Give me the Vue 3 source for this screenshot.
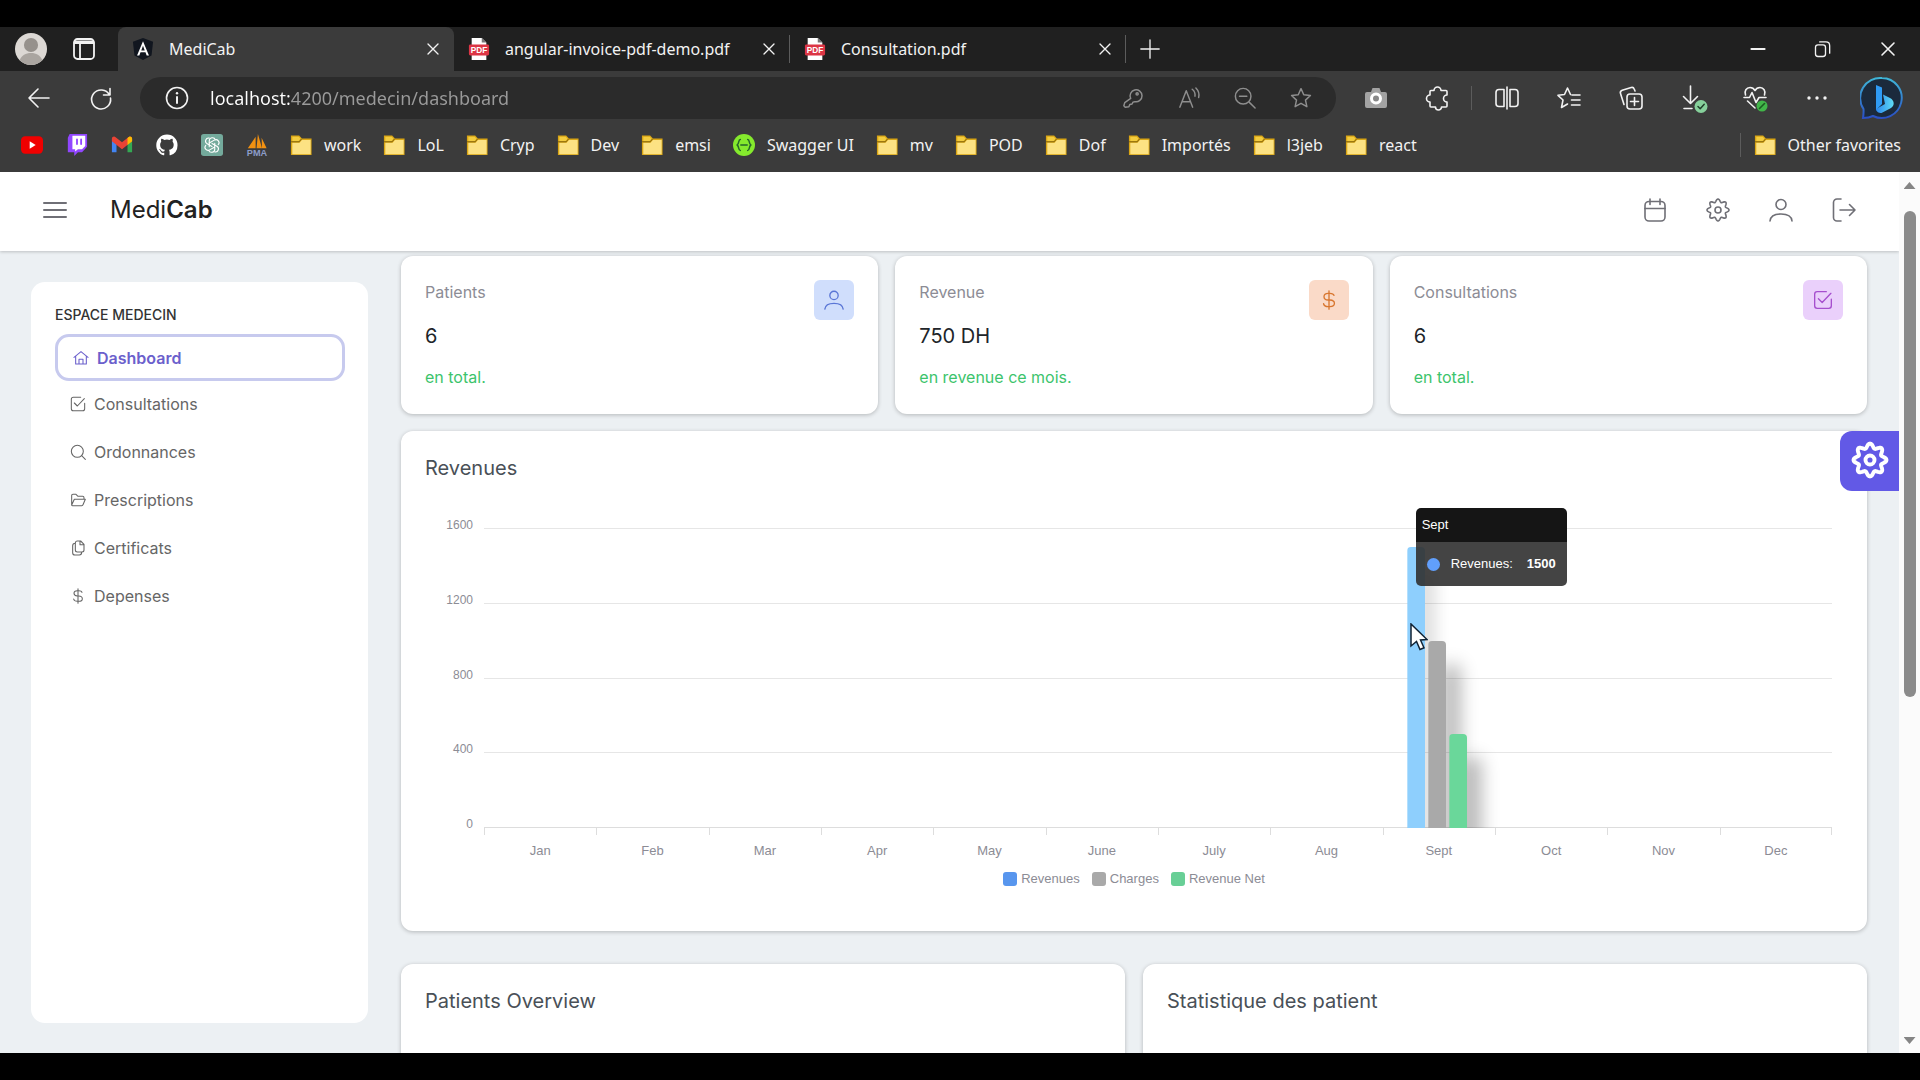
<script setup>
import { ref } from 'vue'

// Eight-lobed outline used by every gear icon
function gearPath(radius, amplitude) {
  const points = []
  for (let i = 0; i < 96; i++) {
    const angle = (i / 96) * Math.PI * 2
    const r = radius + amplitude * Math.cos(8 * angle)
    points.push(`${(12 + r * Math.sin(angle)).toFixed(2)} ${(12 - r * Math.cos(angle)).toFixed(2)}`)
  }
  return `M${points.join('L')}Z`
}

const folder = '<path d="M1 1.500h9l3 3.500h10.500V23H1z" fill="#d9a514" stroke="none"/><path d="M2.500 3h7l2 2.200L9.500 7.500h-7z" fill="#f3cc3f" stroke="none"/><path d="M2.500 9.500h8L13 6.500h9.500V22h-20z" fill="#fce283" stroke="none"/><path d="M1.500 8.500h8.500L12.500 5.500" stroke="#7d6010" stroke-width="1"/>'

const icons = {
  profile: '<circle cx="12" cy="12" r="12" fill="#dcd8d4" stroke="none"/><circle cx="12" cy="9" r="5.300" fill="#96918c" stroke="none"/><path d="M3.500 20.500c1.500-4 4.500-5.500 8.500-5.500s7 1.500 8.500 5.500a12 12 0 0 1-17 0z" fill="#aaa5a0" stroke="none"/>',
  tabs: '<rect x="2" y="2" width="20" height="20" rx="3.500" stroke-width="1.800"/><path d="M2.500 6h19M8 7v14.500" stroke-width="1.800"/><path d="M3 3.500h18v3H3z" fill="currentColor" stroke="none"/>',
  angular: '<path d="M12 0l11 4-1.700 15L12 24 2.700 19 1 4z" fill="#11161f" stroke="none"/><path d="M12 3.500L5.500 19H8l1.300-3.500h5.400L16 19h2.500zm0 5l1.900 5h-3.800z" fill="#fff" stroke="none"/>',
  close: '<path d="M6 6l12 12M18 6L6 18"/>',
  plus: '<path d="M12 1v22M1 12h22"/>',
  minimise: '<path d="M4 12h16" stroke-width="2.200"/>',
  restore: '<rect x="3" y="7" width="12" height="14" rx="3"/><path d="M8 3.500h7.500c3 0 4.500 1.500 4.500 4.500V17"/>',
  back: '<path d="M22 12H2M11 3l-9 9 9 9"/>',
  refresh: '<path d="M20.500 9A9.500 9.500 0 1 0 21.500 12M21 2.500V9h-6.500"/>',
  info: '<circle cx="12" cy="12" r="10.500"/><path d="M12 11v6" stroke-width="2"/><circle cx="12" cy="7.300" r="1.200" fill="currentColor" stroke="none"/>',
  key: '<path d="M9.500 12.500a6.500 6.500 0 1 1 4.500 3.500l-2 .5-1 2-2.500.5-1 2.500L3.500 22 2 20.500 3 17z"/><circle cx="16.500" cy="7.500" r="1.200"/>',
  read: '<path d="M2 22L9 4l7 18M4.500 16h9M15.500 2.500c2.500 2 3.500 4.500 3 7.500M19.500 1c3 3 4 6.500 3 10.500"/>',
  zoomout: '<circle cx="10" cy="10" r="8.500"/><path d="M16.500 16.500L23 23M6 10h8"/>',
  star: '<path d="M12 1.800l3 6.700 7.300.8-5.400 5 1.500 7.200L12 17.800l-6.400 3.700 1.500-7.200-5.400-5L9 8.500z"/>',
  camera: '<path d="M3 6h4l1.500-4h7L17 6h4a2 2 0 0 1 2 2v12a2 2 0 0 1-2 2H3a2 2 0 0 1-2-2V8a2 2 0 0 1 2-2z" fill="#a3a3a3" stroke="none"/><circle cx="12" cy="12.500" r="4.500" fill="#888" stroke="#fff" stroke-width="3"/>',
  puzzle: '<path d="M8 4.500a3.500 3.500 0 0 1 7 0h5a1 1 0 0 1 1 1V9a3.400 3.400 0 0 0 0 7v4a1 1 0 0 1-1 1h-4.500a3 3 0 0 1-6 0H5a1 1 0 0 1-1-1v-4a3.500 3.500 0 0 1 0-7V5.500a1 1 0 0 1 1-1z"/>',
  split: '<path d="M9 3.500H4a3 3 0 0 0-3 3v11a3 3 0 0 0 3 3h5zM15 3.500h5a3 3 0 0 1 3 3v11a3 3 0 0 1-3 3h-5zM12 1v22"/>',
  favourites: '<path d="M13.500 8.500L10.500 2l-3 6.500-6.500.8 5 4.700-1.500 7.500 6-3.500M15 9h8M14.500 14H23M14.500 19H23"/>',
  collections: '<rect x="8" y="8" width="15" height="15" rx="3"/><path d="M15.500 11.500v8M11.500 15.500h8M5 18.500L1.500 7.500c-.5-1.500.3-2.800 1.700-3.300l9-2.700c1.400-.4 2.600.3 3 1.500l.8 2"/>',
  download: '<path d="M9.500 0v17.500M2.500 10.500l7 7 7-7M3 22.500h8"/><circle cx="20" cy="20.500" r="6.500" fill="#86d09b" stroke="none"/><path d="M17 20.500l2.200 2.200 4-4.400" stroke="#20402a" stroke-width="1.500"/>',
  heart: '<path d="M2.500 9C1 5 3.500 1.500 7 1.500c2.200 0 4 1.200 5 3 1-1.800 2.800-3 5-3C20.500 1.500 23 5 21.500 9M1 11.500h5.500L9 6.500l4 10 3-5h7M4.500 15L12 22"/><circle cx="19" cy="20" r="5.500" fill="#41b649" stroke="none"/><path d="M16.500 22.500l5-5" stroke="#1b5c20"/>',
  dots: '<g fill="currentColor" stroke="none"><circle cx="4" cy="12" r="1.700"/><circle cx="12" cy="12" r="1.700"/><circle cx="20" cy="12" r="1.700"/></g>',
  pdf: '<path d="M4 0h11l5 5v19H4z" fill="#fff" stroke="none"/><path d="M15 0l5 5h-5z" fill="#777" stroke="none"/><rect x="1" y="7" width="22" height="12" rx="1.500" fill="#dc3545" stroke="none"/><text x="12" y="16.200" text-anchor="middle" font-family="Liberation Sans, sans-serif" font-size="9" font-weight="700" fill="#fff" stroke="none">PDF</text>',
  folder,
  youtube: '<rect x="0" y="2.500" width="24" height="19" rx="4.500" fill="#f00000" stroke="none"/><path d="M9.500 8l6.500 4-6.500 4z" fill="#fff" stroke="none"/>',
  twitch: '<path d="M4 0h19v14l-5.500 6H13l-4 4v-4H2V4z" fill="#9146ff" stroke="none"/><path d="M7 2h14v11l-3.500 3.500H13L10 19v-2.500H7z" fill="#fff" stroke="none"/><path d="M12 6v5M16.500 6v5" stroke="#9146ff" stroke-width="2"/>',
  gmail: '<g stroke="none"><path d="M1 5v15h5V9z" fill="#4285f4"/><path d="M23 5v15h-5V9z" fill="#34a853"/><path d="M1 5c0-2 2.500-3 4-1.500l7 5.500 7-5.500C20.500 2 23 3 23 5v3l-11 8.500L1 8z" fill="#ea4335"/><path d="M18 4.300L19 3.500C20.500 2 23 3 23 5v3l-5 4z" fill="#fbbc04"/></g>',
  github: '<path d="M12 .500C5.400.500.300 5.700.300 12.200c0 5.200 3.300 9.500 7.900 11.100.6.100.8-.3.800-.6v-2.200c-3.200.7-3.900-1.400-3.900-1.400-.5-1.300-1.300-1.700-1.300-1.700-1-.7.100-.7.100-.7 1.200.1 1.800 1.200 1.800 1.200 1 1.800 2.700 1.300 3.400 1 .1-.8.400-1.300.7-1.600-2.600-.3-5.300-1.300-5.300-5.800 0-1.300.5-2.300 1.200-3.100-.1-.3-.5-1.500.1-3.100 0 0 1-.3 3.200 1.200a11 11 0 0 1 5.800 0c2.200-1.500 3.200-1.200 3.200-1.200.6 1.600.2 2.800.1 3.100.8.800 1.200 1.800 1.200 3.100 0 4.500-2.700 5.500-5.300 5.800.4.400.8 1.100.8 2.200v3.200c0 .3.200.7.800.6a11.700 11.700 0 0 0 7.900-11.100C23.700 5.700 18.600.500 12 .500z" fill="#fff" stroke="none"/>',
  gpt: '<rect width="24" height="24" rx="3" fill="#74aa9c" stroke="none"/><g fill="none" stroke="#fff" stroke-width="1.200"><path d="M9 13.800V7.500c0-4 5.500-4.600 6.500-1.300M12 10.300l5.300 3c3.500 2 1.200 7-2.200 6.200"/><path d="M15 10.200v6.300c0 4-5.500 4.600-6.500 1.300M12 13.700l-5.300-3c-3.500-2-1.200-7 2.200-6.200M9 9.900l5.500-3.200c3.500-2 6.800 2.300 4.300 5M15 14.100l-5.500 3.200c-3.500 2-6.800-2.300-4.300-5"/></g>',
  pma: '<path d="M2 15.500L10.500 3v12.500zM11.500 15.500L13 0l4.500 15.500zM17.500 15.500L17 4l5.500 11.500z" fill="#f29111" stroke="none"/><text x="12" y="24" text-anchor="middle" font-family="Liberation Sans, sans-serif" font-size="10" font-weight="700" fill="#8c9cc8" stroke="none">PMA</text>',
  swagger: '<circle cx="12" cy="12" r="12" fill="#85ea2d" stroke="none"/><path d="M8 6C5.500 6 7 10.500 4.500 12 7 13.500 5.500 18 8 18M16 6c2.500 0 1 4.500 3.500 6-2.500 1.500-1 6-3.500 6M8.500 12h7" stroke="#24652b" stroke-width="1.600"/>',
  menu: '<path d="M1 5h22M1 12h22M1 19h22" stroke-width="2"/>',
  calendar: '<rect x="2" y="3.500" width="20" height="19.500" rx="4"/><path d="M2 10.500h20M7 1v5.500M17 1v5.500"/>',
  gear: `<path d="${gearPath(9.5, 1.5)}"/><circle cx="12" cy="12" r="3"/>`,
  user: '<circle cx="12" cy="6.500" r="5"/><path d="M1 23c.5-5 4-7 11-7s10.500 2 11 7"/>',
  logout: '<path d="M9 1H5a3.500 3.500 0 0 0-3.500 3.500v15A3.500 3.500 0 0 0 5 23h4M8 12h15M17.500 6.500L23 12l-5.500 5.500"/>',
  home: '<path d="M1.500 11L12 2.500 22.500 11M4 9.500V21h16V9.500M9 21v-7h6v7"/>',
  check: '<path d="M22 11v8a3 3 0 0 1-3 3H5a3 3 0 0 1-3-3V5a3 3 0 0 1 3-3h11M6.500 10.500L11 15 21.500 4"/>',
  search: '<circle cx="11" cy="11" r="9"/><path d="M17.500 17.500L23 23"/>',
  open: '<path d="M2.500 19.500V5.500a2 2 0 0 1 2-2h4.500l3 3h7a2 2 0 0 1 2 2V11M2.500 19.500l4-8.500H23l-3.500 8a2 2 0 0 1-2 1.500H4a1.500 1.500 0 0 1-1.500-1z"/>',
  copy: '<path d="M11 1.500h5l5 5V15a3 3 0 0 1-3 3h-7a3 3 0 0 1-3-3V4.500a3 3 0 0 1 3-3zM15 1.500V7h6M8 5C5 5 4 6.500 4 8.500V19a3.500 3.500 0 0 0 3.500 3.500H14c2.500 0 3.500-1.500 3.500-4"/>',
  dollar: '<path d="M12 1v22M18 6.500C17.500 4.500 15.500 4 13 4h-2C8 4 6 5.500 6 8s2 3.800 5 4h2c3.500.2 5.500 1.500 5.500 4s-2 4-5.500 4h-2c-3 0-5-1-5.500-3.500"/>'
}

const tabs = [
  { title: 'MediCab', icon: 'angular', active: true },
  { title: 'angular-invoice-pdf-demo.pdf', icon: 'pdf' },
  { title: 'Consultation.pdf', icon: 'pdf' }
]
const addressTools = [
  ['key', 'Saved passwords'], ['read', 'Read aloud'], ['zoomout', 'Zoom'], ['star', 'Add to favorites']
]
const extensionTools = [['camera', 'Screenshot'], ['puzzle', 'Extensions']]
const browserTools = [
  ['split', 'Split screen'], ['favourites', 'Favorites'], ['collections', 'Collections'],
  ['download', 'Downloads'], ['heart', 'Browser essentials'], ['dots', 'Settings and more']
]
const siteLinks = [
  ['youtube', 'YouTube'], ['twitch', 'Twitch'], ['gmail', 'Gmail'],
  ['github', 'GitHub'], ['gpt', 'ChatGPT'], ['pma', 'phpMyAdmin']
]
const favourites = ['work', 'LoL', 'Cryp', 'Dev', 'emsi', 'Swagger UI', 'mv', 'POD', 'Dof', 'Importés', 'l3jeb', 'react']

const address = ref('localhost:4200/medecin/dashboard')

const headerTools = [['calendar', 'Calendrier'], ['gear', 'Paramètres'], ['user', 'Profil'], ['logout', 'Déconnexion']]
const menu = [
  ['home', 'Dashboard'], ['check', 'Consultations'], ['search', 'Ordonnances'],
  ['open', 'Prescriptions'], ['copy', 'Certificats'], ['dollar', 'Depenses']
]
const stats = [
  { label: 'Patients', value: '6', note: 'en total.', icon: 'user', tone: 'blue' },
  { label: 'Revenue', value: '750 DH', note: 'en revenue ce mois.', icon: 'dollar', tone: 'orange' },
  { label: 'Consultations', value: '6', note: 'en total.', icon: 'check', tone: 'purple' }
]
const axisMax = 1600
const axis = [1600, 1200, 800, 400, 0]
const months = ['Jan', 'Feb', 'Mar', 'Apr', 'May', 'June', 'July', 'Aug', 'Sept', 'Oct', 'Nov', 'Dec']
const series = [
  { name: 'Revenues', tone: 'revenues', values: { Sept: 1500 } },
  { name: 'Charges', tone: 'charges', values: { Sept: 1000 } },
  { name: 'Revenue Net', tone: 'net', values: { Sept: 500 } }
]
const hovered = 'Sept'
</script>

<template>
  <div class="window">
    <div class="tab-strip">
      <div class="strip-start">
        <button class="profile" aria-label="Profile"><svg class="icon s32" viewBox="0 0 24 24" v-html="icons.profile"></svg></button>
        <button aria-label="Workspaces"><svg class="icon s24" viewBox="0 0 24 24" v-html="icons.tabs"></svg></button>
      </div>
      <div v-for="tab in tabs" :key="tab.title" class="tab" :class="{ active: tab.active }">
        <svg class="icon s22" viewBox="0 0 24 24" v-html="icons[tab.icon]"></svg>
        <span class="tab-title">{{ tab.title }}</span>
        <button aria-label="Close tab"><svg class="icon s20" viewBox="0 0 24 24" v-html="icons.close"></svg></button>
      </div>
      <button class="new-tab" aria-label="New tab"><svg class="icon s20" viewBox="0 0 24 24" v-html="icons.plus"></svg></button>
      <div class="window-controls">
        <button aria-label="Minimize"><svg class="icon s20" viewBox="0 0 24 24" v-html="icons.minimise"></svg></button>
        <button aria-label="Restore"><svg class="icon s20" viewBox="0 0 24 24" v-html="icons.restore"></svg></button>
        <button aria-label="Close"><svg class="icon s24" viewBox="0 0 24 24" v-html="icons.close"></svg></button>
      </div>
    </div>

    <div class="toolbar">
      <button class="tool" aria-label="Back"><svg class="icon s24" viewBox="0 0 24 24" v-html="icons.back"></svg></button>
      <button class="tool" aria-label="Refresh"><svg class="icon s24" viewBox="0 0 24 24" v-html="icons.refresh"></svg></button>
      <form class="address" @submit.prevent>
        <button type="button" class="site-info" aria-label="Site information"><svg class="icon s24" viewBox="0 0 24 24" v-html="icons.info"></svg></button>
        <input v-model="address" type="text" aria-label="Address" spellcheck="false" />
        <button v-for="[icon, label] in addressTools" :key="icon" type="button" class="address-tool" :aria-label="label">
          <svg class="icon s22" viewBox="0 0 24 24" v-html="icons[icon]"></svg>
        </button>
      </form>
      <button v-for="[icon, label] in extensionTools" :key="icon" class="tool" :aria-label="label">
        <svg class="icon s24" viewBox="0 0 24 24" v-html="icons[icon]"></svg>
      </button>
      <span class="divider"></span>
      <button v-for="[icon, label] in browserTools" :key="icon" class="tool" :aria-label="label">
        <svg class="icon s24" viewBox="0 0 24 24" v-html="icons[icon]"></svg>
      </button>
      <button class="bing" aria-label="Bing Chat">
        <svg viewBox="0 0 44 44" width="44" height="44">
          <defs>
            <linearGradient id="ring" x1="0" y1="0" x2="0" y2="1"><stop offset="0" stop-color="#3fb6d8" /><stop offset="1" stop-color="#2a4fc4" /></linearGradient>
            <linearGradient id="letter" x1="0" y1="0" x2="1" y2="0"><stop offset="0" stop-color="#2a86ee" /><stop offset="1" stop-color="#5fdcf5" /></linearGradient>
          </defs>
          <path d="M22 2a20 20 0 1 1-9 38c-3 1.500-6 2-10 2 .5-3 .8-5 .5-9A20 20 0 0 1 22 2z" fill="#1b2a3c" stroke="url(#ring)" stroke-width="2" />
          <path d="M16 9l6 2.500v16.500l-6 6z" fill="#2f9bf5" />
          <path d="M23 18.500l7 3.500c5 2.700 4.500 8 1 10l-9.500 5c-3 0-5.500-1.500-5.500-4l9-5z" fill="url(#letter)" />
        </svg>
      </button>
    </div>

    <nav class="bookmarks" aria-label="Favorites bar">
      <a v-for="[icon, label] in siteLinks" :key="icon" href="#" class="site" :aria-label="label">
        <svg class="icon s22" viewBox="0 0 24 24" v-html="icons[icon]"></svg>
      </a>
      <a v-for="name in favourites" :key="name" href="#" class="bookmark">
        <svg class="icon s22" viewBox="0 0 24 24" v-html="icons[name === 'Swagger UI' ? 'swagger' : 'folder']"></svg>{{ name }}
      </a>
      <span class="divider push"></span>
      <a href="#" class="bookmark other"><svg class="icon s22" viewBox="0 0 24 24" v-html="icons.folder"></svg>Other favorites</a>
    </nav>

    <div class="viewport">
      <div class="page">
        <header class="page-header">
          <button aria-label="Menu"><svg class="icon s24" viewBox="0 0 24 24" v-html="icons.menu"></svg></button>
          <a href="#" class="brand">Medi<b>Cab</b></a>
          <div class="header-tools">
            <button v-for="[icon, label] in headerTools" :key="icon" :aria-label="label">
              <svg class="icon s24" viewBox="0 0 24 24" v-html="icons[icon]"></svg>
            </button>
          </div>
        </header>

        <div class="content">
          <aside class="sidebar">
            <h2>ESPACE MEDECIN</h2>
            <nav aria-label="Espace medecin">
              <a v-for="([icon, label], i) in menu" :key="label" href="#" :class="{ current: i === 0 }">
                <svg class="icon s16" viewBox="0 0 24 24" v-html="icons[icon]"></svg>{{ label }}
              </a>
            </nav>
          </aside>

          <main class="main">
            <div class="stats">
              <section v-for="stat in stats" :key="stat.label" class="card stat">
                <div>
                  <h3>{{ stat.label }}</h3>
                  <p class="value">{{ stat.value }}</p>
                  <p class="note">{{ stat.note }}</p>
                </div>
                <span class="badge" :class="stat.tone"><svg class="icon s20" viewBox="0 0 24 24" v-html="icons[stat.icon]"></svg></span>
              </section>
            </div>

            <section class="card revenues-card">
              <h3 class="card-title">Revenues</h3>
              <div class="chart">
                <div class="axis"><span v-for="tick in axis" :key="tick">{{ tick }}</span></div>
                <div class="plot">
                  <div class="bands"><i v-for="n in 4" :key="n"></i></div>
                  <div class="columns">
                    <div v-for="month in months" :key="month" class="column">
                      <template v-for="s in series" :key="s.name">
                        <div v-if="s.values[month]" class="bar" :class="s.tone" :style="{ height: (s.values[month] / axisMax) * 100 + '%' }"></div>
                      </template>
                      <template v-if="month === hovered">
                        <div class="tooltip" role="tooltip">
                          <div class="tooltip-title">{{ month }}</div>
                          <div class="tooltip-body"><i></i><span>{{ series[0].name }}:</span><b>{{ series[0].values[month] }}</b></div>
                        </div>
                        <svg class="pointer" viewBox="0 0 18 28" width="18" height="28"><path d="M1 1v22l5.500-4.500 3.500 8 4-1.700-3.500-7.800 6.500-.5z" fill="#fff" stroke="#123" stroke-width="1.500" /></svg>
                      </template>
                    </div>
                  </div>
                </div>
                <div class="months"><span v-for="month in months" :key="month">{{ month }}</span></div>
              </div>
              <ul class="legend">
                <li v-for="s in series" :key="s.name"><i :class="s.tone"></i>{{ s.name }}</li>
              </ul>
            </section>

            <div class="overview">
              <section class="card"><h3 class="card-title">Patients Overview</h3></section>
              <section class="card"><h3 class="card-title">Statistique des patient</h3></section>
            </div>
          </main>
        </div>
        <button class="customise" aria-label="Personnaliser"><svg class="icon" viewBox="0 0 24 24" v-html="icons.gear"></svg></button>
      </div>
      <div class="scrollbar"><i class="up"></i><i class="thumb"></i><i class="down"></i></div>
    </div>
  </div>
</template>

<style>
html,
body {
  margin: 0;
  background: #000;
}
</style>

<style scoped>
* {
  box-sizing: border-box;
}
.window {
  display: flex;
  flex-direction: column;
  height: 100vh;
  padding: 27px 0;
  overflow: hidden;
  background: #000;
  color: #f2f2f2;
  font-family: "Noto Sans", "Open Sans", sans-serif;
  font-size: 16px;
}
button {
  display: flex;
  align-items: center;
  justify-content: center;
  padding: 0;
  border: 0;
  background: none;
  color: inherit;
  font: inherit;
}
a {
  color: inherit;
  text-decoration: none;
}
h2,
h3,
p,
ul {
  margin: 0;
  padding: 0;
  font-weight: 400;
  list-style: none;
}
.icon {
  flex: none;
  overflow: visible;
  fill: none;
  stroke: currentColor;
  stroke-width: 1.6;
  stroke-linecap: round;
  stroke-linejoin: round;
}
.s16 { width: 16px; height: 16px; }
.s20 { width: 20px; height: 20px; }
.s22 { width: 22px; height: 22px; }
.s24 { width: 24px; height: 24px; }
.s32 { width: 32px; height: 32px; }
.divider {
  flex: none;
  width: 1px;
  height: 24px;
  background: #5c5c5c;
}

/* Tabs */
.tab-strip {
  display: flex;
  flex: none;
  align-items: stretch;
  height: 44px;
  background: #202020;
}
.strip-start {
  display: flex;
  gap: 25px;
  width: 118px;
  padding-left: 15px;
}
.tab {
  display: flex;
  align-items: center;
  gap: 15px;
  width: 336px;
  padding: 0 11px 0 14px;
  background: linear-gradient(#5c5c5c, #5c5c5c) right center / 1px 28px no-repeat;
}
.tab.active {
  border-radius: 8px 8px 0 0;
  background: #3b3b3b;
}
.tab-title {
  flex: 1;
  overflow: hidden;
  white-space: nowrap;
}
.new-tab {
  width: 48px;
}
.window-controls {
  display: flex;
  margin-left: auto;
}
.window-controls button {
  width: 65px;
}

/* Toolbar */
.toolbar {
  display: flex;
  flex: none;
  align-items: center;
  height: 56px;
  padding: 0 5px 2px 8px;
  background: #3b3b3b;
}
.tool {
  flex: none;
  width: 62px;
  height: 40px;
}
.toolbar .divider {
  margin: 0 4px 0 2px;
}
.address {
  display: flex;
  flex: 1;
  align-items: center;
  min-width: 0;
  height: 42px;
  margin: 0 9px 0 8px;
  padding: 0 7px 0 16px;
  border-radius: 21px;
  background: #2b2b2b;
}
.site-info {
  flex: none;
  width: 42px;
}
.address input {
  flex: 1;
  min-width: 0;
  margin: 0;
  padding: 0 12px;
  border: 0;
  outline: 0;
  background: linear-gradient(90deg, #fff 92px, #9b9b9b 92px);
  background-clip: text;
  -webkit-background-clip: text;
  color: transparent;
  font: inherit;
  font-size: 18px;
  line-height: 30px;
}
.address-tool {
  flex: none;
  width: 56px;
  color: #8e8e8e;
}
.bing {
  flex: none;
  width: 67px;
}

/* Favorites bar */
.bookmarks {
  display: flex;
  flex: none;
  align-items: center;
  height: 45px;
  padding: 0 19px 10px 9px;
  background: #3b3b3b;
  white-space: nowrap;
}
.site {
  display: flex;
  justify-content: center;
  width: 45px;
}
.bookmark {
  display: flex;
  align-items: center;
  gap: 12px;
  padding: 0 11px;
}
.push {
  margin: 0 2px 0 auto;
}
.bookmark.other {
  padding-right: 0;
}

/* Page */
.viewport {
  display: flex;
  flex: 1;
  min-height: 0;
  background: #fbfbfb;
}
.page {
  position: relative;
  flex: 1;
  min-width: 0;
  overflow: hidden;
  background: #ecf0f3;
  color: #212529;
  font-family: Inter, sans-serif;
}
.page-header {
  position: relative;
  display: flex;
  align-items: center;
  height: 79px;
  padding: 0 24px 3px 43px;
  background: #fff;
  box-shadow: 0 1px 3px rgba(0, 0, 0, 0.2);
  color: #6f6f76;
}
.brand {
  margin-left: 43px;
  color: #222;
  font-size: 24px;
  line-height: 30px;
}
.brand b {
  font-weight: 600;
}
.header-tools {
  display: flex;
  margin-left: auto;
}
.header-tools button {
  width: 63px;
  height: 40px;
}
.content {
  display: flex;
  gap: 33px;
  padding: 5px 32px 0 31px;
}
.sidebar {
  flex: none;
  width: 337px;
  height: 741px;
  margin-top: 26px;
  padding: 23px 23px 0 24px;
  border-radius: 14px;
  background: #fff;
}
.sidebar h2 {
  color: #333;
  font-size: 14px;
  font-weight: 500;
  line-height: 20px;
}
.sidebar nav {
  display: flex;
  flex-direction: column;
  margin-top: 9px;
}
.sidebar nav a {
  display: flex;
  align-items: center;
  gap: 8px;
  height: 48px;
  padding-left: 15px;
  color: #666;
  font-size: 16px;
}
.sidebar nav a.current {
  height: 47px;
  margin-bottom: -1px;
  border: 3px solid #c7caee;
  border-radius: 14px;
  color: #6b60cc;
  font-weight: 600;
}
.main {
  flex: 1;
  min-width: 0;
}
.card {
  padding: 24px;
  border-radius: 12px;
  background: #fff;
  box-shadow: 0 1px 4px rgba(0, 0, 0, 0.24);
}
.stats {
  display: grid;
  grid-template-columns: repeat(3, 1fr);
  gap: 17px;
}
.stat {
  display: flex;
  align-items: flex-start;
  justify-content: space-between;
  padding-bottom: 27px;
}
.stat h3 {
  margin-top: 2px;
  color: #8c8c95;
  font-size: 16px;
  line-height: 20px;
}
.value {
  margin: 22px 0 19px;
  font-size: 20px;
  line-height: 24px;
}
.note {
  color: #3cc46c;
  font-size: 16px;
  line-height: 20px;
}
.badge {
  display: flex;
  align-items: center;
  justify-content: center;
  width: 40px;
  height: 40px;
  border-radius: 6px;
}
.badge.blue { background: #d0defc; color: #5a76d6; }
.badge.orange { background: #fadac8; color: #d8762f; }
.badge.purple { background: #ead0fb; color: #a64fce; }
.card-title {
  color: #495057;
  font-size: 20px;
  line-height: 26px;
}

/* Revenue chart */
.revenues-card {
  margin: 17px 0 33px;
  padding-bottom: 44px;
}
.chart {
  display: grid;
  grid-template-columns: 48px 1fr;
  column-gap: 11px;
  margin-top: 47px;
  padding-right: 11px;
  color: #8c8c95;
  font-family: "Liberation Sans", sans-serif;
  font-size: 13px;
  line-height: 16px;
}
.axis {
  display: flex;
  flex-direction: column;
  justify-content: space-between;
  margin: -11px 0 -4px;
  font-size: 12px;
  text-align: right;
}
.plot {
  display: grid;
  height: 300px;
}
.bands,
.columns {
  display: grid;
  grid-area: 1 / 1;
}
.bands {
  border-bottom: 1px solid #ddd;
}
.bands i {
  border-top: 1px solid #e6e6e6;
}
.columns {
  grid-template-columns: repeat(12, 1fr);
}
.column {
  position: relative;
  display: flex;
  gap: 3px;
  align-items: flex-end;
  justify-content: center;
  padding-right: 3px;
}
.bar {
  width: 18px;
  border-radius: 4px 4px 0 0;
  clip-path: inset(-20px -50px 0 0);
}
.bar.revenues {
  background: #8ecffd;
  box-shadow: 10px 24px 16px rgba(0, 0, 0, 0.14);
}
.bar.charges {
  background: #a9a9a9;
  box-shadow: 14px 24px 18px rgba(0, 0, 0, 0.3);
}
.bar.net {
  background: #6ad79a;
  box-shadow: 14px 24px 18px rgba(0, 0, 0, 0.3);
}
.months {
  display: grid;
  grid-column: 2;
  grid-template-columns: repeat(12, 1fr);
  text-align: center;
}
.months span {
  padding-top: 15px;
  background: linear-gradient(#ddd, #ddd) left top / 1px 7px no-repeat;
}
.months span:last-child {
  background: linear-gradient(#ddd, #ddd) left top / 1px 7px no-repeat, linear-gradient(#ddd, #ddd) right top / 1px 7px no-repeat;
}
.tooltip {
  position: absolute;
  top: -20px;
  left: 33px;
  z-index: 1;
  width: 151px;
  overflow: hidden;
  border-radius: 5px;
  color: #fff;
}
.tooltip-title {
  padding: 9px 6px;
  background: #151515;
}
.tooltip-body {
  display: flex;
  align-items: center;
  height: 44px;
  padding: 0 11px;
  background: rgba(48, 48, 48, 0.9);
}
.tooltip-body i {
  width: 13px;
  height: 13px;
  margin-right: 11px;
  border-radius: 50%;
  background: #619ffb;
}
.tooltip-body b {
  margin-left: auto;
}
.pointer {
  position: absolute;
  top: 95px;
  left: 27px;
  z-index: 2;
}
.legend {
  display: flex;
  justify-content: center;
  gap: 12px;
  margin-top: 12px;
  color: #8c8c95;
  font-family: "Liberation Sans", sans-serif;
  font-size: 13px;
  line-height: 16px;
}
.legend li {
  display: flex;
  align-items: center;
  gap: 4px;
}
.legend i {
  width: 14px;
  height: 14px;
  border-radius: 3px;
}
.legend .revenues { background: #5896ee; }
.legend .charges { background: #a9a9a9; }
.legend .net { background: #68cf96; }

.overview {
  display: grid;
  grid-template-columns: repeat(2, 1fr);
  gap: 18px;
}
.overview .card {
  height: 400px;
}
.customise {
  position: absolute;
  top: 259px;
  right: 0;
  width: 59px;
  height: 60px;
  padding-bottom: 3px;
  border-radius: 12px 0 0 12px;
  background: #6259e6;
  color: #fff;
}
.customise .icon {
  width: 36px;
  height: 36px;
  stroke-width: 2.6;
}
.scrollbar {
  display: flex;
  flex: none;
  flex-direction: column;
  align-items: center;
  width: 21px;
  padding: 10px 0 9px;
}
.thumb {
  width: 12px;
  height: 486px;
  margin: 22px 0 auto;
  border-radius: 6px;
  background: #8b8b8b;
}
.up,
.down {
  width: 12px;
  height: 7px;
  background: #858585;
  clip-path: polygon(50% 0, 100% 100%, 0 100%);
}
.down {
  clip-path: polygon(0 0, 100% 0, 50% 100%);
}
</style>
